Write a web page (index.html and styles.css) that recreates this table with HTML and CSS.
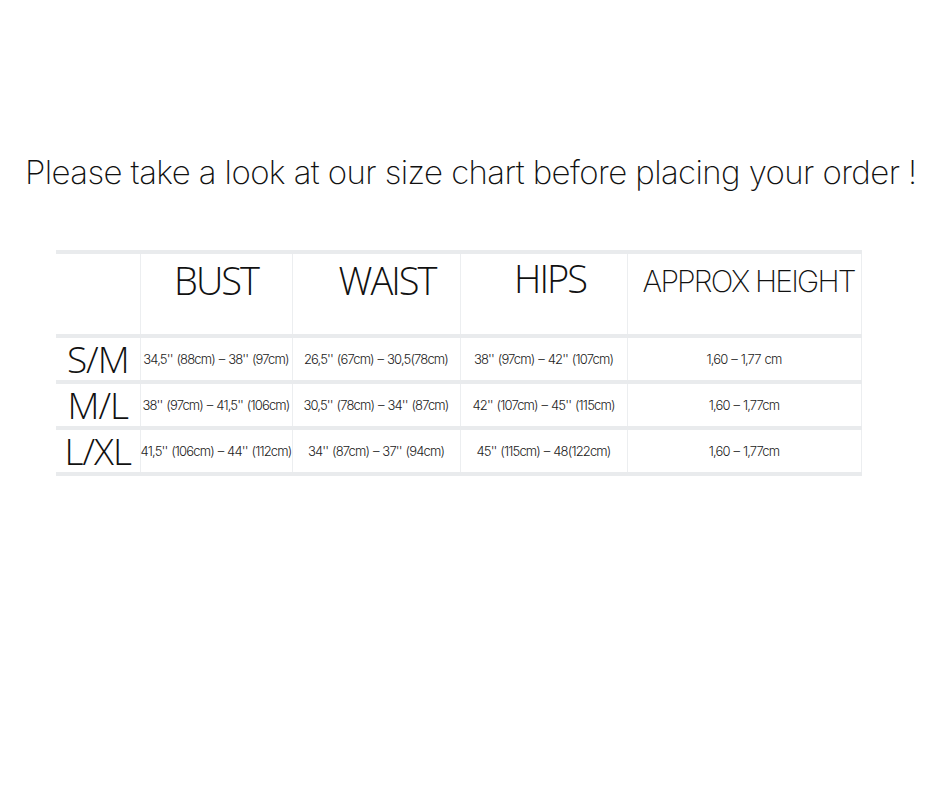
FILE: index.html
```html
<!DOCTYPE html>
<html>
<head>
<meta charset="utf-8">
<link rel="stylesheet" href="styles.css">
</head>
<body>
<main class="page">
  <h1 class="title">Please take a look at our size chart before placing your order !</h1>
  <table class="chart">
    <colgroup>
      <col class="c0"><col class="c1"><col class="c2"><col class="c3"><col class="c4">
    </colgroup>
    <thead>
      <tr>
        <th></th>
        <th><span class="h">BUST</span></th>
        <th><span class="h waist">WAIST</span></th>
        <th><span class="h hips">HIPS</span></th>
        <th><span class="h approx">APPROX HEIGHT</span></th>
      </tr>
    </thead>
    <tbody>
      <tr>
        <td class="size">S/M</td>
        <td>34,5'' (88cm) – 38'' (97cm)</td>
        <td>26,5'' (67cm) – 30,5(78cm)</td>
        <td>38'' (97cm) – 42'' (107cm)</td>
        <td>1,60 – 1,77 cm</td>
      </tr>
      <tr>
        <td class="size">M/L</td>
        <td>38'' (97cm) – 41,5'' (106cm)</td>
        <td>30,5'' (78cm) – 34'' (87cm)</td>
        <td>42'' (107cm) – 45'' (115cm)</td>
        <td>1,60 – 1,77cm</td>
      </tr>
      <tr>
        <td class="size">L/XL</td>
        <td>41,5'' (106cm) – 44'' (112cm)</td>
        <td>34'' (87cm) – 37'' (94cm)</td>
        <td>45'' (115cm) – 48(122cm)</td>
        <td>1,60 – 1,77cm</td>
      </tr>
    </tbody>
  </table>
</main>
</body>
</html>
```
FILE: styles.css
```css
html, body {
  margin: 0;
  padding: 0;
  background: #ffffff;
}

.page {
  width: 940px;
  height: 788px;
  padding-top: 150px;
  box-sizing: border-box;
}

.title {
  margin: 0 0 0 25px;
  font-family: Inter, "Open Sans", sans-serif;
  font-weight: 200;
  font-size: 33px;
  line-height: 44px;
  letter-spacing: -0.6px;
  color: #111;
  white-space: nowrap;
}

.chart {
  margin: 56px 0 0 56px;
  width: 805px;
  border-collapse: collapse;
  table-layout: fixed;
  font-family: Inter, "Open Sans", sans-serif;
  color: #222;
}

.c0 { width: 84px; }
.c1 { width: 152px; }
.c2 { width: 168px; }
.c3 { width: 167px; }
.c4 { width: 234px; }

.chart th,
.chart td {
  padding: 0;
  border-left: 1px solid #eceef0;
  border-right: 1px solid #eceef0;
  border-top: 4px solid #e9ebed;
  border-bottom: 4px solid #e9ebed;
  text-align: center;
  white-space: nowrap;
}

.chart th:first-child,
.chart td:first-child {
  border-left: none;
}

.chart th {
  height: 80px;
  vertical-align: top;
  font-weight: 300;
}

.h {
  display: block;
  padding-top: 4px;
  font-family: "Open Sans", sans-serif;
  font-weight: 300;
  font-size: 38px;
  line-height: 44px;
  color: #111;
  letter-spacing: -2px;
}

.h.waist {
  padding-left: 22px;
}

.h.hips {
  padding-top: 2px;
  padding-left: 13px;
}

.h.approx {
  font-family: Inter, sans-serif;
  font-weight: 200;
  font-size: 30px;
  letter-spacing: -1.8px;
  text-align: left;
  padding-left: 15px;
  padding-top: 5px;
}

.chart td {
  height: 42px;
  font-size: 13px;
  font-weight: 300;
  letter-spacing: -0.85px;
  word-spacing: 1px;
  color: #222;
}

.chart td.size {
  font-family: "Open Sans", sans-serif;
  font-size: 37px;
  font-weight: 300;
  letter-spacing: -1px;
  word-spacing: 0;
  color: #111;
  line-height: 36px;
}
```
